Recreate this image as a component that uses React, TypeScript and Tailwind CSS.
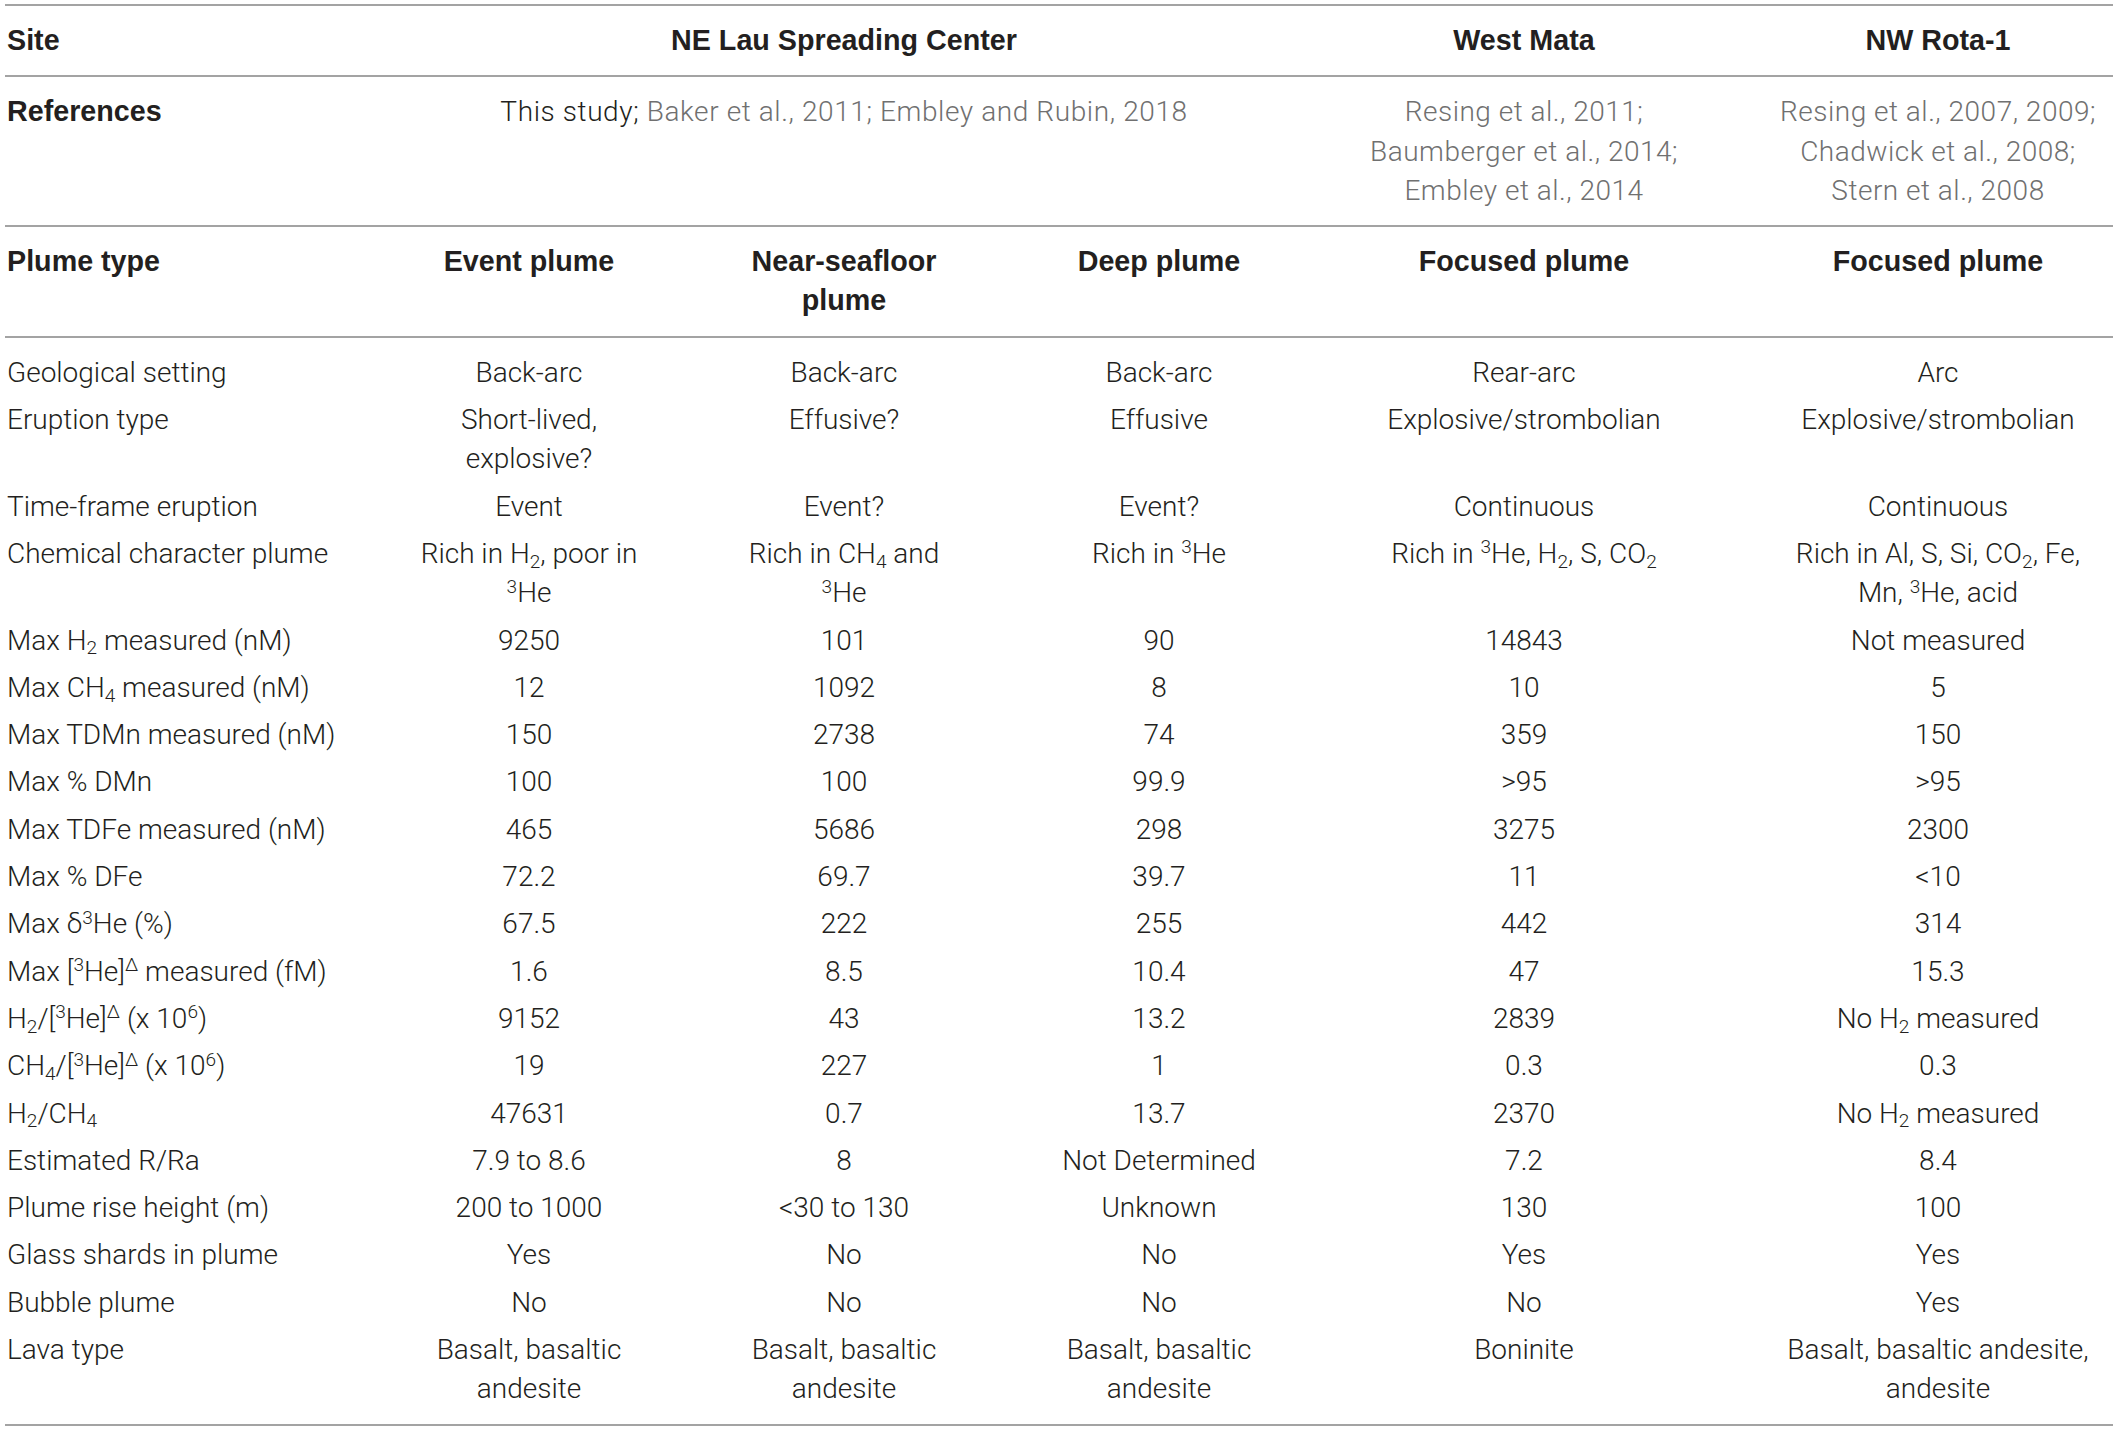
import type { ReactNode } from 'react';

type Cells = [ReactNode, ReactNode, ReactNode, ReactNode, ReactNode, ReactNode];

// Small helpers for chemical notation
const Sb = ({ children }: { children: ReactNode }) => (
  <sub className="text-[0.68em]">{children}</sub>
);
const Sp = ({ children }: { children: ReactNode }) => (
  <sup className="text-[0.68em]">{children}</sup>
);

const He3 = (
  <>
    <Sp>3</Sp>He
  </>
);

const gridCols = 'grid grid-cols-[366px_316px_314px_316px_414px_382px]';
const boldFont = "font-['Liberation_Sans',Arial,sans-serif] font-bold text-[28.7px]";

const bodyRows: Cells[] = [
  ['Geological setting', 'Back-arc', 'Back-arc', 'Back-arc', 'Rear-arc', 'Arc'],
  [
    'Eruption type',
    <>
      Short-lived,
      <br />
      explosive?
    </>,
    'Effusive?',
    'Effusive',
    'Explosive/strombolian',
    'Explosive/strombolian',
  ],
  ['Time-frame eruption', 'Event', 'Event?', 'Event?', 'Continuous', 'Continuous'],
  [
    'Chemical character plume',
    <>
      Rich in H<Sb>2</Sb>, poor in
      <br />
      {He3}
    </>,
    <>
      Rich in CH<Sb>4</Sb> and
      <br />
      {He3}
    </>,
    <>Rich in {He3}</>,
    <>
      Rich in {He3}, H<Sb>2</Sb>, S, CO<Sb>2</Sb>
    </>,
    <>
      Rich in Al, S, Si, CO<Sb>2</Sb>, Fe,
      <br />
      Mn, {He3}, acid
    </>,
  ],
  [
    <>
      Max H<Sb>2</Sb> measured (nM)
    </>,
    '9250',
    '101',
    '90',
    '14843',
    'Not measured',
  ],
  [
    <>
      Max CH<Sb>4</Sb> measured (nM)
    </>,
    '12',
    '1092',
    '8',
    '10',
    '5',
  ],
  ['Max TDMn measured (nM)', '150', '2738', '74', '359', '150'],
  ['Max % DMn', '100', '100', '99.9', '>95', '>95'],
  ['Max TDFe measured (nM)', '465', '5686', '298', '3275', '2300'],
  ['Max % DFe', '72.2', '69.7', '39.7', '11', '<10'],
  [<>Max δ{He3} (%)</>, '67.5', '222', '255', '442', '314'],
  [
    <>
      Max [{He3}]<Sp>Δ</Sp> measured (fM)
    </>,
    '1.6',
    '8.5',
    '10.4',
    '47',
    '15.3',
  ],
  [
    <>
      H<Sb>2</Sb>/[{He3}]<Sp>Δ</Sp> (x 10<Sp>6</Sp>)
    </>,
    '9152',
    '43',
    '13.2',
    '2839',
    <>
      No H<Sb>2</Sb> measured
    </>,
  ],
  [
    <>
      CH<Sb>4</Sb>/[{He3}]<Sp>Δ</Sp> (x 10<Sp>6</Sp>)
    </>,
    '19',
    '227',
    '1',
    '0.3',
    '0.3',
  ],
  [
    <>
      H<Sb>2</Sb>/CH<Sb>4</Sb>
    </>,
    '47631',
    '0.7',
    '13.7',
    '2370',
    <>
      No H<Sb>2</Sb> measured
    </>,
  ],
  ['Estimated R/Ra', '7.9 to 8.6', '8', 'Not Determined', '7.2', '8.4'],
  ['Plume rise height (m)', '200 to 1000', '<30 to 130', 'Unknown', '130', '100'],
  ['Glass shards in plume', 'Yes', 'No', 'No', 'Yes', 'Yes'],
  ['Bubble plume', 'No', 'No', 'No', 'No', 'Yes'],
  [
    'Lava type',
    <>
      Basalt, basaltic
      <br />
      andesite
    </>,
    <>
      Basalt, basaltic
      <br />
      andesite
    </>,
    <>
      Basalt, basaltic
      <br />
      andesite
    </>,
    'Boninite',
    <>
      Basalt, basaltic andesite,
      <br />
      andesite
    </>,
  ],
];

function Row({ cells, header = false }: { cells: Cells; header?: boolean }) {
  return (
    <div className={`${gridCols} ${header ? `py-[15px] ${boldFont}` : 'py-[4px]'}`}>
      <div className="pl-[2px] whitespace-nowrap">{cells[0]}</div>
      <div className="text-center whitespace-nowrap">{cells[1]}</div>
      <div className="text-center whitespace-nowrap">{cells[2]}</div>
      <div className="text-center whitespace-nowrap">{cells[3]}</div>
      <div className="text-center whitespace-nowrap">{cells[4]}</div>
      <div className="pl-[32px] text-center whitespace-nowrap">{cells[5]}</div>
    </div>
  );
}

export default function App() {
  return (
    <div className="min-h-screen bg-white pt-[4px] font-['Roboto','Liberation_Sans',sans-serif] text-[28px] font-light leading-[39.3px] text-[#231f20]">
      <div className="ml-[5px] w-[2108px] border-t-2 border-[#a3a3a3]">
        {/* Site */}
        <div className={`${gridCols} border-b-2 border-[#a3a3a3] py-[15px] ${boldFont}`}>
          <div className="pl-[2px]">Site</div>
          <div className="col-span-3 text-center">NE Lau Spreading Center</div>
          <div className="text-center">West Mata</div>
          <div className="pl-[32px] text-center">NW Rota-1</div>
        </div>

        {/* References */}
        <div className={`${gridCols} border-b-2 border-[#a3a3a3] py-[15px]`}>
          <div className={`pl-[2px] ${boldFont}`}>References</div>
          <div className="col-span-3 text-center whitespace-nowrap tracking-[0.6px]">
            This study; <span className="text-[#707070]">Baker et al., 2011; Embley and Rubin, 2018</span>
          </div>
          <div className="text-center text-[#707070] tracking-[0.5px]">
            Resing et al., 2011;
            <br />
            Baumberger et al., 2014;
            <br />
            Embley et al., 2014
          </div>
          <div className="pl-[32px] text-center text-[#707070] tracking-[0.5px]">
            Resing et al., 2007, 2009;
            <br />
            Chadwick et al., 2008;
            <br />
            Stern et al., 2008
          </div>
        </div>

        {/* Plume type */}
        <div className="border-b-2 border-[#a3a3a3]">
          <Row
            header
            cells={[
              'Plume type',
              'Event plume',
              <>
                Near-seafloor
                <br />
                plume
              </>,
              'Deep plume',
              'Focused plume',
              'Focused plume',
            ]}
          />
        </div>

        {/* Data rows */}
        <div className="border-b-2 border-[#a3a3a3] pt-[11px] pb-[11px]">
          {bodyRows.map((r, i) => (
            <Row key={i} cells={r} />
          ))}
        </div>
      </div>
    </div>
  );
}
